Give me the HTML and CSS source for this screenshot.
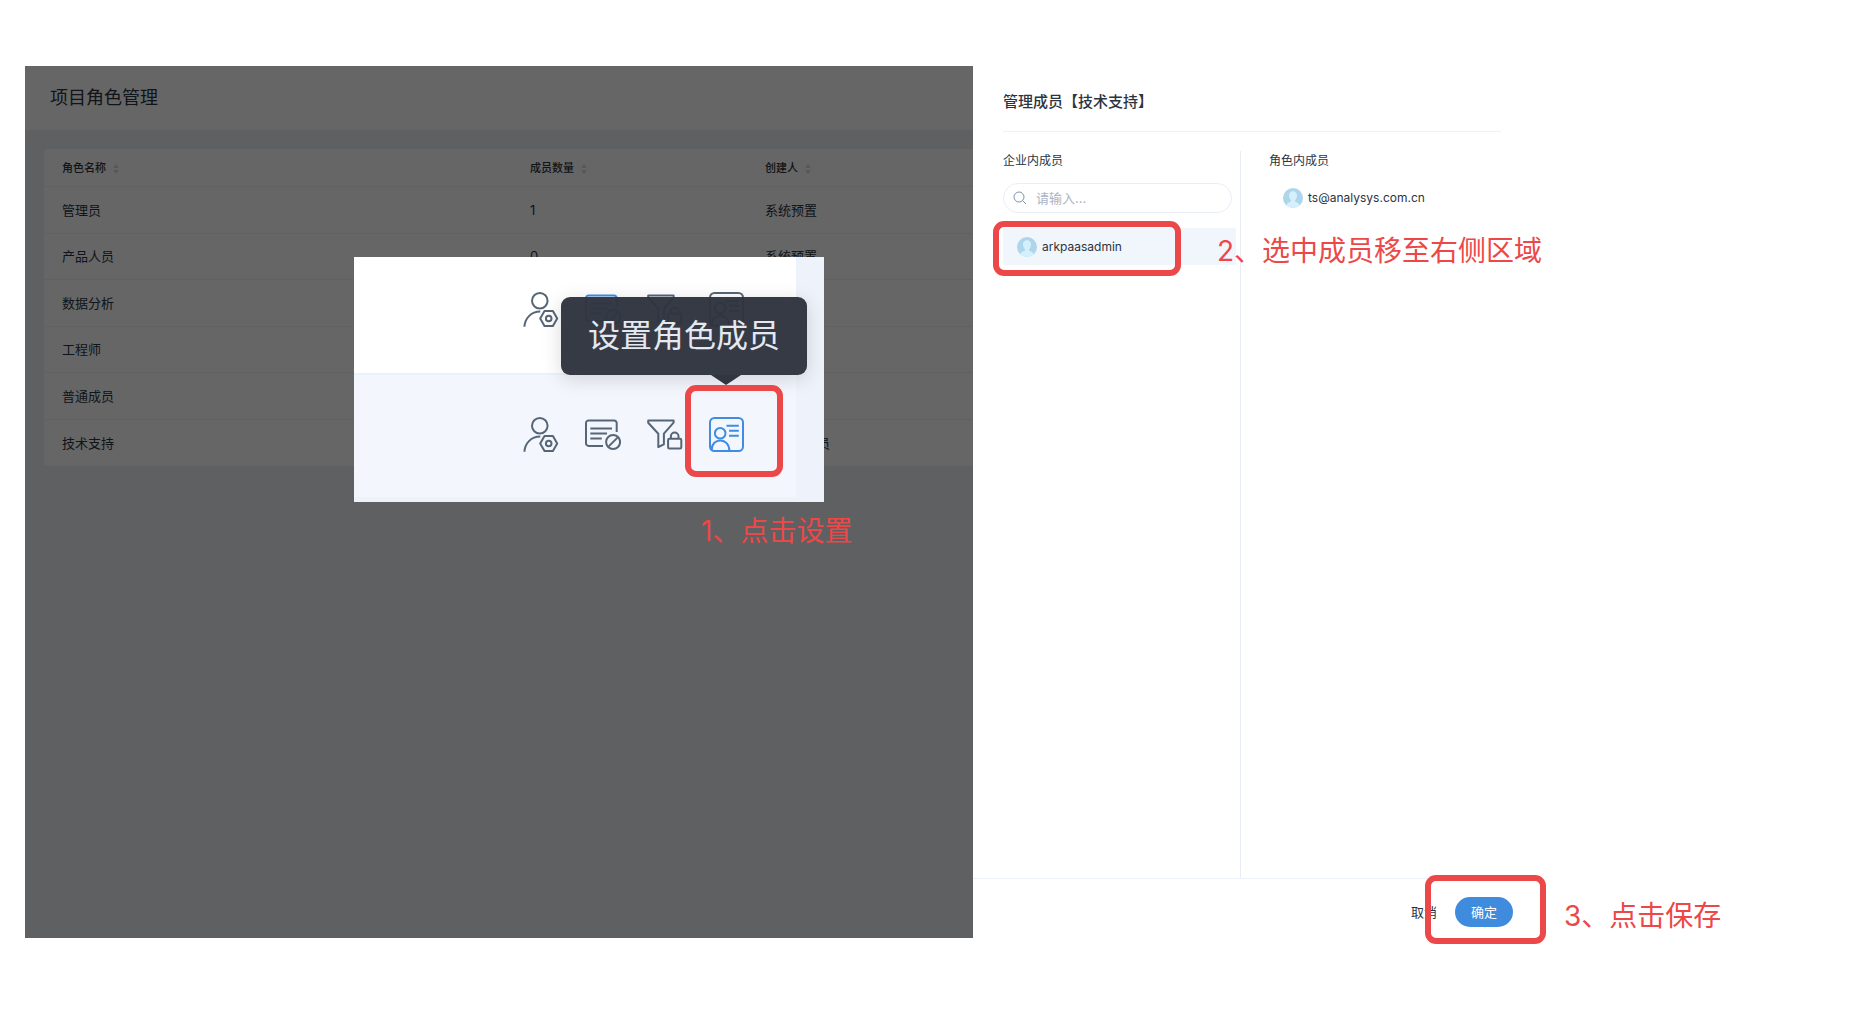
FILE: index.html
```html
<!DOCTYPE html>
<html lang="zh-CN">
<head>
  <meta charset="UTF-8">
  <meta name="viewport" content="width=device-width, initial-scale=1.0">
  <title>项目角色管理</title>
  <link rel="stylesheet" href="styles.css">
</head>
<body>
  <!-- shared icons -->
  <svg class="sprite" aria-hidden="true">
    <symbol id="i-user" viewBox="0 0 36 36">
      <circle cx="16.8" cy="8.800" r="7.800"/>
      <path d="M1.400 34.800C1.900 26.500 7.800 19.600 17.300 19.600"/>
      <path d="M21.500 18.900h8.400l4.300 7.600-4.300 7.600h-8.400l-4.300-7.600z"/>
      <circle cx="25.700" cy="26.500" r="2.800"/>
    </symbol>
    <symbol id="i-list" viewBox="0 0 36 36">
      <path d="M18 28.9H3.6A2.6 2.6 0 0 1 1 26.3V6a2.6 2.6 0 0 1 2.6-2.6h25.5A2.6 2.6 0 0 1 31.7 6v9"/>
      <path d="M5.3 11.4H27M5.3 16.4H22M5.3 21.4h11.5"/>
      <circle cx="28.1" cy="25" r="7"/>
      <path d="M23.7 29.4l8.8-8.8"/>
    </symbol>
    <symbol id="i-filter" viewBox="0 0 36 36">
      <path d="M1.2 3.5h25.4v2.2l-9.7 11v10.6L11.3 30V16.7L1.2 5.7z"/>
      <rect x="21.1" y="21.7" width="13.2" height="9.8" rx="1.2"/>
      <path d="M23.9 21.5v-2.2a3.8 3.8 0 0 1 7.6 0v2.2"/>
    </symbol>
    <symbol id="i-card" viewBox="0 0 36 36">
      <rect x="1" y="1" width="33" height="33" rx="4.5"/>
      <circle cx="11.2" cy="16.3" r="5.3"/>
      <path d="M2.6 33.2C2.6 20 20.4 20 20.4 34M17.5 8.8h12.3M20 13.8h9.8M20 18.8h9.8"/>
    </symbol>
    <symbol id="i-avatar" viewBox="0 0 20 20">
      <circle cx="10" cy="10" r="10" fill="#aed6ea"/>
      <path d="M3.2 17.3c.6-2.2 2.6-2.8 4.8-3.8v-1.2C6.7 11 6 9.4 6 7.6 6 5 7.7 3.3 10 3.3s4 1.7 4 4.300c0 1.800-.7 3.400-2 4.700v1.200c2.200 1 4.200 1.600 4.800 3.800A10 10 0 0 1 3.200 17.300z" fill="#d6effd"/>
    </symbol>
    <symbol id="i-sort" viewBox="0 0 6 10">
      <path d="M0 4l3-4 3 4zM0 6l3 4 3-4z"/>
    </symbol>
  </svg>

  <main class="stage">
    <section class="page">
      <header class="page-header">
        <h1>项目角色管理</h1>
      </header>
      <div class="page-body">
        <table class="roles">
          <thead>
            <tr>
              <th class="col-name">角色名称<svg class="sort"><use href="#i-sort"/></svg></th>
              <th class="col-count">成员数量<svg class="sort"><use href="#i-sort"/></svg></th>
              <th>创建人<svg class="sort"><use href="#i-sort"/></svg></th>
            </tr>
          </thead>
          <tbody>
            <tr><td>管理员</td><td>1</td><td>系统预置</td></tr>
            <tr><td>产品人员</td><td>0</td><td>系统预置</td></tr>
            <tr><td>数据分析</td><td></td><td></td></tr>
            <tr><td>工程师</td><td></td><td></td></tr>
            <tr><td>普通成员</td><td></td><td></td></tr>
            <tr><td>技术支持</td><td></td><td>系统管理员</td></tr>
          </tbody>
        </table>
      </div>
      <div class="mask"></div>

      <!-- enlarged view of the row actions -->
      <div class="closeup">
        <div class="actions">
          <button type="button" aria-label="设置用户"><svg><use href="#i-user"/></svg></button>
          <button type="button" class="active" aria-label="设置权限"><svg><use href="#i-list"/></svg></button>
          <button type="button" aria-label="数据权限"><svg><use href="#i-filter"/></svg></button>
          <button type="button" aria-label="角色成员"><svg><use href="#i-card"/></svg></button>
        </div>
        <div class="actions hover">
          <button type="button" aria-label="设置用户"><svg><use href="#i-user"/></svg></button>
          <button type="button" aria-label="设置权限"><svg><use href="#i-list"/></svg></button>
          <button type="button" aria-label="数据权限"><svg><use href="#i-filter"/></svg></button>
          <button type="button" class="active" aria-label="角色成员"><svg><use href="#i-card"/></svg></button>
        </div>
        <div class="tooltip">设置角色成员</div>
        <div class="mark mark-set"></div>
      </div>
      <p class="note note-set">1、点击设置</p>
    </section>

    <aside class="drawer">
      <h2>管理成员【技术支持】</h2>
      <div class="columns">
        <div class="source">
          <h3>企业内成员</h3>
          <label class="search">
            <svg viewBox="0 0 14 14"><circle cx="6" cy="6" r="5"/><path d="M9.7 9.7l3.300 3.300"/></svg>
            <input type="text" placeholder="请输入..." aria-label="搜索成员">
          </label>
          <div class="member selected">
            <svg><use href="#i-avatar"/></svg>
            <span>arkpaasadmin</span>
            <div class="mark mark-member"></div>
            <p class="note note-member">2、选中成员移至右侧区域</p>
          </div>
        </div>
        <div class="target">
          <h3>角色内成员</h3>
          <div class="member">
            <svg><use href="#i-avatar"/></svg>
            <span>ts@analysys.com.cn</span>
          </div>
        </div>
      </div>
      <footer class="drawer-footer">
        <button type="button" class="cancel">取消</button>
        <button type="button" class="ok">确定</button>
        <div class="mark mark-save"></div>
        <p class="note note-save">3、点击保存</p>
      </footer>
    </aside>
  </main>
</body>
</html>
```

FILE: styles.css
```css
* { box-sizing: border-box; }
body { margin: 0; background: #fff; color: #2c3440; font-family: Inter, "Noto Sans CJK SC", sans-serif; font-size: 13px; line-height: 20px; }
h1, h2, h3, p { margin: 0; font-weight: 400; }
button { padding: 0; border: none; background: none; font: inherit; color: inherit; cursor: pointer; }
.sprite { position: absolute; width: 0; height: 0; }

.stage { display: grid; grid-template-columns: 1fr 558px; min-height: 100vh; padding: 66px 337px 92px 25px; }

/* role list */
.page { position: relative; background: #edf1f6; }
.page-header { height: 64px; padding: 17px 25px; background: #fff; }
.page-header h1 { font-size: 18px; line-height: 30px; }
.page-body { padding: 19px 0 0 19px; }
.roles { width: 100%; height: 317px; table-layout: fixed; border-collapse: separate; border-spacing: 0; background: #fff; border-radius: 4px 0 0 4px; }
.roles th, .roles td { padding: 0 18px; text-align: left; border-bottom: 1px solid #edf2f8; }
.roles th { height: 38px; font-size: 11px; font-weight: 500; }
.roles td { height: 46px; }
.roles tbody tr:last-child td { border-bottom: none; }
.col-name { width: 468px; }
.col-count { width: 235px; }
.sort { width: 6px; height: 10px; margin-left: 7px; vertical-align: middle; fill: #d5dae2; }
.mask { position: absolute; inset: 0; background: rgba(0, 0, 0, .6); }

/* enlarged row actions */
.closeup { position: absolute; left: 329px; top: 191px; width: 470px; height: 245px; padding: 0 28px 5px 0; background: #edf2fb; display: flex; flex-direction: column; }
.actions { display: flex; align-items: center; justify-content: flex-end; gap: 26px; height: 125px; padding: 0 51px 0 0; background: #fff; color: #566678; }
.actions:first-child { height: 116px; padding-bottom: 10px; }
.actions.hover { padding-bottom: 2px; background: #f3f7fd; border-top: 2px solid #ecf2f9; }
.actions button { height: 36px; }
.actions svg { display: block; width: 36px; height: 36px; fill: none; stroke: currentColor; stroke-width: 2; stroke-linejoin: round; }
.actions .active { color: #3f8ce2; }
.tooltip { position: absolute; left: 207px; top: 40px; padding: 19px 27px; border-radius: 9px; background: rgba(46, 52, 63, .97); box-shadow: 0 4px 20px rgba(0, 0, 0, .15); color: #e4e8f1; font-size: 32px; line-height: 40px; white-space: nowrap; }
.tooltip::after { content: ""; position: absolute; left: 150px; top: 100%; border: 15px solid transparent; border-top: 10px solid #303641; border-bottom: none; }

/* drawer */
.drawer { display: flex; flex-direction: column; background: #fff; }
.drawer h2 { margin: 0 30px; padding: 26px 0 19px; border-bottom: 1px solid #edf2f8; font-size: 15px; font-weight: 500; }
.drawer h3 { font-size: 12px; }
.columns { flex: 1; display: flex; margin-top: 19px; padding: 0 30px; }
.source { width: 238px; padding-right: 4px; border-right: 1px solid #e9eef5; }
.target { flex: 1; padding-left: 28px; }
.search { display: flex; align-items: center; gap: 9px; width: 229px; height: 30px; margin: 12px 0 15px; padding: 0 9px; border: 1px solid #e9eef6; border-radius: 15px; }
.search svg { flex: none; width: 14px; height: 14px; fill: none; stroke: #7f93ad; }
.search input { width: 100%; padding: 0; border: none; outline: none; background: none; font: inherit; }
.search input::placeholder { color: #a8b4c6; }
.member { display: flex; align-items: center; gap: 5px; height: 37px; padding-left: 14px; font-size: 12px; }
.member svg { width: 20px; height: 20px; }
.member.selected { position: relative; background: #f1f5fc; }
.target .member { margin-top: 8px; }
.drawer-footer { position: relative; display: flex; justify-content: flex-end; gap: 18px; padding: 18px 18px 11px; border-top: 1px solid #edf2f8; }
.ok { width: 58px; height: 30px; border-radius: 15px; background: #3f8bdd; color: #fff; }

/* step marks */
.mark { position: absolute; border: 6px solid #ec4849; border-radius: 11px; }
.mark-set { left: 331px; top: 128px; width: 98px; height: 92px; }
.mark-member { left: -10px; top: -7px; width: 188px; height: 55px; }
.mark-save { right: -15px; top: -4px; width: 121px; height: 69px; }
.note { position: absolute; color: #ec4849; font-size: 28px; line-height: 40px; white-space: nowrap; }
.note-set { left: 676px; top: 445px; }
.note-member { left: 214px; top: 3px; }
.note-save { left: 591px; top: 17px; }
```
